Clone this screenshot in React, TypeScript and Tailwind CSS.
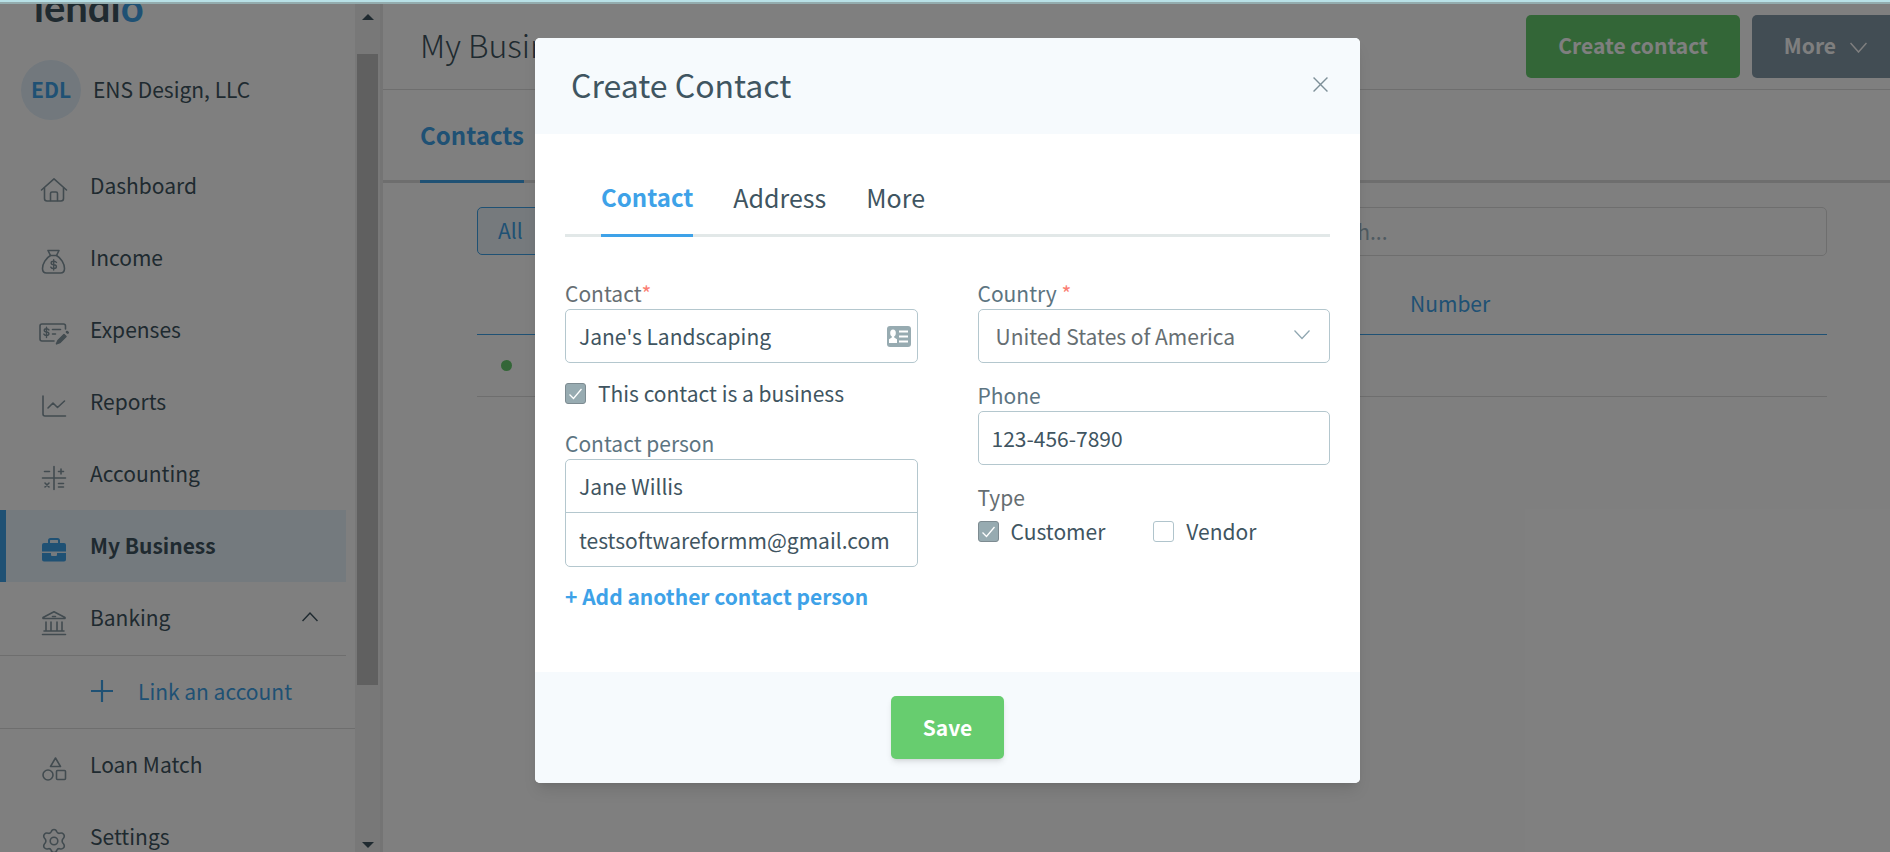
import React from "react";

interface NavItem {
	key: string;
	label: string;
	icon: React.ReactNode;
}

function Icon({ children }: { children: React.ReactNode }) {
	return (
		<svg
			className="w-[30px] h-[26px] shrink-0"
			viewBox="0 0 30 26"
			fill="none"
			stroke="currentColor"
			strokeWidth={1.6}
			strokeLinecap="round"
			strokeLinejoin="round"
		>
			{children}
		</svg>
	);
}

const mainItems: NavItem[] = [
	{
		key: "dashboard",
		label: "Dashboard",
		icon: (
			<Icon>
				<path d="M2.5 13 15 1.8 27.5 13" />
				<path d="M5.5 11v10.5q0 2.5 2.5 2.5h14q2.5 0 2.5-2.5V11" />
				<path d="M11.5 23.5v-7q0-1.5 1.5-1.5h4q1.5 0 1.5 1.5v7" />
			</Icon>
		),
	},
	{
		key: "income",
		label: "Income",
		icon: (
			<Icon>
				<path d="M9 1.5h11l-2.5 5h-6z" />
				<path d="M11.5 6.5C7 9 3.5 14.5 3.5 19.5q0 4.5 4 4.5h14q4 0 4-4.5c0-5-3.5-10.5-8-13" />
				<path
					d="M17.5 13.5c-.6-1-1.6-1.3-2.8-1.3-3.4 0-3.4 3.4 0 3.6 3.6.2 3.6 3.8 0 3.8-1.3 0-2.4-.5-2.9-1.5M14.7 10.8v10.3"
					strokeWidth={1.4}
				/>
			</Icon>
		),
	},
	{
		key: "expenses",
		label: "Expenses",
		icon: (
			<Icon>
				<path d="M15 20H3q-2 0-2-2V5q0-2 2-2h21.5q2 0 2 2v3" />
				<path
					d="M10 9c-.6-.9-1.5-1.2-2.5-1.2-3 0-3 3 0 3.2 3.2.2 3.2 3.5 0 3.5-1.2 0-2.2-.5-2.6-1.4M7.5 6.3v10.2"
					strokeWidth={1.4}
				/>
				<path d="M13.5 8.5h8M13.5 13h3" />
				<path d="m19 19.5 6-6 2 2-6 6-3.5 1.3z" fill="currentColor" />
				<path d="m28 11 .7.7" strokeWidth={2.5} />
			</Icon>
		),
	},
	{
		key: "reports",
		label: "Reports",
		icon: (
			<Icon>
				<path d="M4 3v18q0 2 2 2h20.5" />
				<path d="m9 15 5-5 4.5 4.5L25.5 8" />
			</Icon>
		),
	},
	{
		key: "accounting",
		label: "Accounting",
		icon: (
			<Icon>
				<path d="M15 1.5v23M3.5 13h23" />
				<path d="M5.5 6.5h5M19.5 6.5h5M22 4v5M6 18l4 4M10 18l-4 4M19.5 18.5h5M19.5 22h5" />
			</Icon>
		),
	},
	{
		key: "business",
		label: "My Business",
		icon: (
			<Icon>
				<path d="M10 6V3.5q0-1.5 1.5-1.5h7q1.5 0 1.5 1.5V6" strokeWidth={2} />
				<path
					d="M5 6h20q2 0 2 2v6.5H3V8q0-2 2-2zM3 16h9v2q0 1 1 1h4q1 0 1-1v-2h9v6.5q0 2-2 2H5q-2 0-2-2z"
					fill="currentColor"
					stroke="none"
				/>
			</Icon>
		),
	},
];

const bottomItems: NavItem[] = [
	{
		key: "loan",
		label: "Loan Match",
		icon: (
			<Icon>
				<path d="m16.5 2 5 8.5h-10z" />
				<circle cx="9" cy="19" r="5" />
				<rect x="17.5" y="14.5" width="9" height="9" rx="1" />
			</Icon>
		),
	},
	{
		key: "settings",
		label: "Settings",
		icon: (
			<Icon>
				<circle cx="15" cy="13" r="3.8" />
				<path d="M12.2 3.8q.6-2.3 2.8-2.3t2.8 2.3q.8 1.9 2.9 1.5 2.4-.8 3.9.9 1.4 1.9 0 3.8-1.5 1.5-1.5 3t1.5 3q1.4 1.9 0 3.8-1.5 1.7-3.9.9-2.1-.4-2.9 1.5-.6 2.3-2.8 2.3t-2.8-2.3q-.8-1.9-2.9-1.5-2.4.8-3.9-.9-1.4-1.9 0-3.8 1.5-1.5 1.5-3t-1.5-3q-1.4-1.9 0-3.8 1.5-1.7 3.9-.9 2.1.4 2.9-1.5z" />
			</Icon>
		),
	},
];

function NavLink({ item, active }: { item: NavItem; active?: boolean }) {
	return (
		<a
			href="#"
			className={
				active
					? "flex items-center h-[72px] mr-[9px] border-l-[6px] border-[#3ea2e8] bg-[#e9f4fc] pl-[33px] pb-[2px] gap-[21px] font-bold"
					: "flex items-center h-[72px] pl-[39px] pb-[2px] gap-[21px]"
			}
		>
			<span className={active ? "pt-[10px] text-[#3ea2e8]" : "pt-[10px] text-[#8497a0]"}>
				{item.icon}
			</span>
			{item.label}
		</a>
	);
}

function Sidebar() {
	return (
		<aside className="flex w-[383px] shrink-0 border-r-[3px] border-[#e8e8e8]">
			<div className="flex-1 overflow-hidden">
				<div className="h-14 pl-[34px] font-['Lato'] text-[40px] leading-[6px] font-bold">
					lendi<span className="text-[#3ea2e8]">o</span>
				</div>
				<div className="flex items-center gap-3 pl-[21px] mb-[30px]">
					<span className="flex items-center justify-center size-[60px] pb-[2px] rounded-full bg-[#e4f1fb] font-bold text-[#3ea2e8]">
						EDL
					</span>
					<span className="pb-[2px]">ENS Design, LLC</span>
				</div>
				<nav>
					{mainItems.map((item) => (
						<NavLink key={item.key} item={item} active={item.key === "business"} />
					))}
					<button className="flex items-center h-[74px] w-[346px] pl-[39px] pr-7 pb-1 gap-[21px] border-b border-[#dcdcdc] text-left">
						<span className="pt-3 text-[#8497a0]">
							<Icon>
								<path d="M4 7.5 15 1.8l11 5.7v1H4z" />
								<path d="M13.5 6.5h3M7 12v8M12 12v8M18 12v8M23 12v8M5 21h20M3.5 24.5h23" />
							</Icon>
						</span>
						<span className="flex-1">Banking</span>
						<svg
							className="w-4 h-3"
							viewBox="0 0 16 12"
							fill="none"
							stroke="currentColor"
							strokeWidth={1.5}
						>
							<path d="m.5 10 7.5-8 7.5 8" />
						</svg>
					</button>
					<a
						href="#"
						className="flex items-center h-[73px] pl-[91px] pb-[2px] gap-[25px] border-b border-[#dcdcdc] text-[#3ea2e8]"
					>
						<svg className="size-[22px]" viewBox="0 0 22 22" stroke="currentColor" strokeWidth={2.2}>
							<path d="M11 0v22M0 11h22" />
						</svg>
						Link an account
					</a>
					{bottomItems.map((item) => (
						<NavLink key={item.key} item={item} />
					))}
				</nav>
			</div>
			<div className="flex flex-col items-center w-[25px] bg-[#f1f1f1]">
				<svg className="w-3 h-[50px]" viewBox="0 0 12 50" fill="currentColor">
					<path d="M0 16 6 10l6 6z" />
				</svg>
				<div className="w-[21px] h-[631px] bg-[#c1c1c1]" />
				<svg className="w-3 mt-auto h-[14px]" viewBox="0 0 12 14" fill="currentColor">
					<path d="m0 4 6 6 6-6z" />
				</svg>
			</div>
		</aside>
	);
}

function ContactsPage() {
	return (
		<main className="flex-1 min-w-0">
			<header className="flex items-center justify-between h-[86px] pl-[37px] border-b border-[#dcdcdc]">
				<h1 className="pb-[6px] text-[32px] font-light">My Business</h1>
				<div className="flex gap-3 font-bold text-white">
					<button className="h-[63px] px-8 pb-1 rounded-[5px] bg-[#67cd6f]">
						Create contact
					</button>
					<button className="flex items-center gap-[14px] h-[63px] pl-8 pr-7 pb-1 rounded-[5px] bg-[#849aa8]">
						More
						<svg
							className="w-[17px] h-4 pt-1"
							viewBox="0 0 17 12"
							fill="none"
							stroke="currentColor"
							strokeWidth={1.5}
						>
							<path d="m.5 2 8 9 8-9" />
						</svg>
					</button>
				</div>
			</header>
			<div className="flex h-[93px] pl-[37px] border-b-[3px] border-[#dcdcdc]">
				<a
					href="#"
					className="flex items-center h-[93px] border-b-[3px] border-[#3ea2e8] text-2xl font-bold text-[#3ea2e8]"
				>
					Contacts
				</a>
			</div>
			<section className="pl-[94px] pr-[68px] pt-6">
				<div className="flex justify-between text-[#3ea2e8]">
					<button className="h-12 px-5 pb-[2px] rounded-[5px] border border-[#3ea2e8] bg-[#edf5fb]">
						All
					</button>
					<input
						type="search"
						aria-label="Search contacts"
						placeholder="Search..."
						className="w-[545px] h-[49px] px-5 pb-[2px] rounded-[5px] border border-[#dcdcdc] placeholder:text-[#9db5c2]"
					/>
				</div>
				<table className="w-full table-fixed">
					<thead>
						<tr className="h-[78px] border-b border-[#3ea2e8] text-[#3ea2e8]">
							<th className="w-[933px]" aria-label="Contact" />
							<th className="pt-4 text-left font-normal">Number</th>
						</tr>
					</thead>
					<tbody>
						<tr className="h-[62px] border-b border-[#dcdcdc]">
							<td className="pl-6">
								<div className="size-[11px] rounded-full bg-[#67cd6f]" />
							</td>
							<td />
						</tr>
					</tbody>
				</table>
			</section>
		</main>
	);
}

function Checkbox({
	id,
	label,
	defaultChecked,
}: {
	id: string;
	label: string;
	defaultChecked?: boolean;
}) {
	return (
		<div className="flex items-center gap-3 h-8">
			<span className="relative flex">
				<input
					id={id}
					type="checkbox"
					defaultChecked={defaultChecked}
					className="peer appearance-none size-[21px] rounded-[3px] border border-[#b0c4cc] bg-white checked:border-[#7d8b91] checked:bg-[#97abb1]"
				/>
				<svg
					className="absolute inset-0 hidden size-[21px] text-white pointer-events-none peer-checked:block"
					viewBox="0 0 21 21"
					fill="none"
					stroke="currentColor"
					strokeWidth={1.3}
				>
					<path d="m4.5 11.5 4 4 8-9.5" />
				</svg>
			</span>
			<label htmlFor={id}>{label}</label>
		</div>
	);
}

function CreateContactModal() {
	return (
		<div
			role="dialog"
			aria-label="Create Contact"
			className="w-[825px] overflow-hidden bg-white rounded-[5px] shadow-lg"
		>
			<div className="flex items-center justify-between h-24 pl-9 pr-8 pb-1 bg-[#f6fafd]">
				<h2 className="text-[32px]">Create Contact</h2>
				<button aria-label="Close" className="text-[#7d8f98]">
					<svg className="size-[15px]" viewBox="0 0 14 14" stroke="currentColor" strokeWidth={1.3}>
						<path d="m.5.5 13 13M13.5.5l-13 13" />
					</svg>
				</button>
			</div>
			<div className="px-[30px] pt-[27px] pb-[60px]">
				<div className="flex gap-10 h-[76px] pl-9 border-b-[3px] border-[#e2e8e8] text-[25px]">
					<button className="h-[76px] pb-[2px] border-b-[3px] border-[#3ea2e8] text-2xl font-bold text-[#3ea2e8]">
						Contact
					</button>
					<button className="h-[76px] pb-[5px]">Address</button>
					<button className="h-[76px] pb-[5px]">More</button>
				</div>
				<form className="grid grid-cols-2 gap-[60px] pt-12">
					<div>
						<label htmlFor="contact" className="block h-6 leading-4 text-[#666e72]">
							Contact<span className="text-[#fa7e72]">*</span>
						</label>
						<div className="relative h-[54px]">
							<input
								id="contact"
								defaultValue="Jane's Landscaping"
								className="w-full h-[54px] pl-[13px] pr-10 rounded-[5px] border border-[#b4c7ce]"
							/>
							<svg className="absolute right-[7px] top-[17px] w-6 h-[21px]" viewBox="0 0 24 21">
								<rect width="24" height="21" rx="3" fill="#97abb1" />
								<g fill="#fff">
									<ellipse cx="6" cy="7" rx="2.8" ry="3.5" />
									<path d="M4.8 9h2.4v2.5l2.8 1.7V17H2v-3.8l2.8-1.7z" />
									<path d="M12 4.5h9v2h-9zM12 9.5h9v2h-9zM12 14.5h9v2h-9z" />
								</g>
							</svg>
						</div>
						<div className="pt-[14px] pb-[26px]">
							<Checkbox id="business" label="This contact is a business" defaultChecked />
						</div>
						<label htmlFor="person" className="block h-6 leading-4 text-[#5c7481]">
							Contact person
						</label>
						<div className="overflow-hidden divide-y divide-[#b4c7ce] rounded-[5px] border border-[#b4c7ce]">
							<input
								id="person"
								defaultValue="Jane Willis"
								className="block w-full h-[53px] px-[13px]"
							/>
							<input
								type="email"
								aria-label="Email"
								defaultValue="testsoftwareformm@gmail.com"
								className="block w-full h-[53px] px-[13px]"
							/>
						</div>
						<button type="button" className="block pt-[13px] font-bold text-[#3ea2e8]">
							+ Add another contact person
						</button>
					</div>
					<div>
						<label htmlFor="country" className="block h-6 leading-4 text-[#5c7481]">
							Country <span className="text-[#fa7e72]">*</span>
						</label>
						<div className="relative h-[54px] mb-6">
							<select
								id="country"
								className="w-full h-[54px] pl-[17px] rounded-[5px] border border-[#b4c7ce] bg-white appearance-none text-[#666e72]"
							>
								<option>United States of America</option>
							</select>
							<svg
								className="absolute right-5 top-[21px] w-4 h-[10px] pointer-events-none"
								viewBox="0 0 16 10"
								fill="none"
								stroke="#8fa6b0"
								strokeWidth={1.2}
							>
								<path d="m.5.5 7.5 8 7.5-8" />
							</svg>
						</div>
						<label htmlFor="phone" className="block h-6 leading-4 text-[#5c7481]">
							Phone
						</label>
						<input
							id="phone"
							type="tel"
							defaultValue="123-456-7890"
							className="block w-full h-[54px] px-[13px] mb-6 rounded-[5px] border border-[#b4c7ce]"
						/>
						<div className="h-6 leading-4 text-[#666e72]">Type</div>
						<div className="flex gap-12 pt-[2px]">
							<Checkbox id="customer" label="Customer" defaultChecked />
							<Checkbox id="vendor" label="Vendor" />
						</div>
					</div>
				</form>
			</div>
			<div className="flex justify-center py-6 bg-[#f6fafd]">
				<button className="h-[63px] px-8 pb-[2px] rounded-[5px] bg-[#67cd6f] font-bold text-white shadow-md">
					Save
				</button>
			</div>
		</div>
	);
}

export default function App() {
	return (
		<div className="h-screen overflow-hidden font-['Noto_Sans_CJK_SC',sans-serif] text-[21px] leading-8 text-[#3f5561]">
			<div className="relative z-20 h-1 bg-[#b8e0e6] border-b-2 border-[#93acae]" />
			<div className="relative -mr-[5px] h-[calc(100vh-4px)]">
				<div className="flex h-full overflow-hidden bg-white">
					<Sidebar />
					<ContactsPage />
				</div>
				<div className="absolute inset-0 z-10 flex items-start justify-center pt-[34px] bg-black/50">
					<CreateContactModal />
				</div>
			</div>
		</div>
	);
}
